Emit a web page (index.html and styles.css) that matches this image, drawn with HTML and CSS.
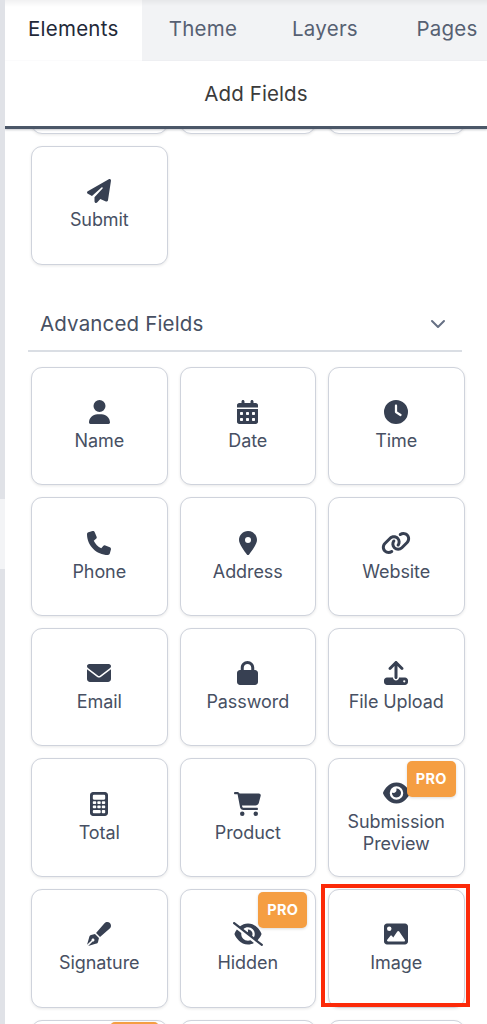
FILE: index.html
```html
<!DOCTYPE html>
<html lang="en">
<head>
<meta charset="utf-8">
<title>Add Fields</title>
<link rel="stylesheet" href="styles.css">
</head>
<body>
<div class="app">
  <aside class="rail"><div class="rail-handle"></div></aside>
  <main class="panel">
    <nav class="tabs">
      <a class="tab tab-active">Elements</a>
      <a class="tab">Theme</a>
      <a class="tab">Layers</a>
      <a class="tab">Pages</a>
    </nav>
    <h1 class="title">Add Fields</h1>
    <div class="scroller">
      <section class="grid grid-basic">
        <div class="card"></div>
        <div class="card"></div>
        <div class="card"></div>
        <div class="card"><svg class="icon" viewBox="0 0 512 512"><path d="M498.1 5.6c10.1 7 15.4 19.1 13.5 31.2l-64 416c-1.5 9.7-7.4 18.2-16 23s-18.9 5.4-28 1.6L284 427.7l-68.5 74.1c-8.9 9.7-22.9 12.9-35.2 8.1S160 493.2 160 480V396.4c0-4 1.5-7.8 4.2-10.7L331.8 202.8c5.8-6.3 5.6-16-.4-22s-15.7-6.4-22-.7L106 360.8 17.7 316.6C7.1 311.3 .3 300.7 0 288.9s5.9-22.8 16.1-28.7l448-256c10.7-6.1 23.9-5.5 34 1.4z"/></svg><span class="label">Submit</span></div>
      </section>
      <header class="section-head">
        <h2 class="section-title">Advanced Fields</h2>
        <svg class="chevron" viewBox="0 0 16 10"><path d="M2 2l6 6 6-6"/></svg>
      </header>
      <section class="grid">
        <div class="card"><svg class="icon" viewBox="0 0 448 512"><path d="M224 256A128 128 0 1 0 224 0a128 128 0 1 0 0 256zm-45.7 48C79.8 304 0 383.8 0 482.3C0 498.7 13.3 512 29.7 512H418.3c16.4 0 29.7-13.3 29.7-29.7C448 383.8 368.2 304 269.7 304H178.3z"/></svg><span class="label">Name</span></div>
        <div class="card"><svg class="icon" viewBox="0 0 448 512"><path fill-rule="evenodd" d="M128 0c17.700 0 32 14.300 32 32V64H288V32c0-17.700 14.300-32 32-32s32 14.300 32 32V64h48c26.500 0 48 21.500 48 48v48H0V112C0 85.500 21.500 64 48 64H96V32c0-17.700 14.300-32 32-32zM0 192H448V464c0 26.500-21.500 48-48 48H48c-26.500 0-48-21.500-48-48zM80 256q-16 0-16 16v32q0 16 16 16h32q16 0 16-16v-32q0-16-16-16zM208 256q-16 0-16 16v32q0 16 16 16h32q16 0 16-16v-32q0-16-16-16zM336 256q-16 0-16 16v32q0 16 16 16h32q16 0 16-16v-32q0-16-16-16zM80 384q-16 0-16 16v32q0 16 16 16h32q16 0 16-16v-32q0-16-16-16zM208 384q-16 0-16 16v32q0 16 16 16h32q16 0 16-16v-32q0-16-16-16zM336 384q-16 0-16 16v32q0 16 16 16h32q16 0 16-16v-32q0-16-16-16z"/></svg><span class="label">Date</span></div>
        <div class="card"><svg class="icon" viewBox="0 0 512 512"><path fill-rule="evenodd" d="M256 0a256 256 0 1 1 0 512A256 256 0 1 1 256 0zM232 120V256c0 8 4 15.5 10.7 20l96 64c11 7.4 25.9 4.4 33.300-6.700s4.400-25.900-6.700-33.300L280 243.200V120c0-13.300-10.700-24-24-24s-24 10.700-24 24z"/></svg><span class="label">Time</span></div>

        <div class="card"><svg class="icon" viewBox="0 0 512 512"><path d="M164.9 24.6c-7.7-18.6-28-28.5-47.4-23.2l-88 24C12.1 30.2 0 46 0 64C0 311.4 200.6 512 448 512c18 0 33.8-12.1 38.6-29.5l24-88c5.3-19.4-4.6-39.7-23.2-47.4l-96-40c-16.3-6.8-35.2-2.1-46.3 11.6L304.7 368C234.3 334.7 177.3 277.7 144 207.3L193.3 167c13.7-11.2 18.4-30 11.6-46.3l-40-96z"/></svg><span class="label">Phone</span></div>
        <div class="card"><svg class="icon" viewBox="0 0 384 512"><path fill-rule="evenodd" d="M215.7 499.2C267 435 384 279.4 384 192C384 86 298 0 192 0S0 86 0 192c0 87.4 117 243 168.3 307.2c12.300 15.300 35.100 15.300 47.400 0zM192 128a64 64 0 1 1 0 128 64 64 0 1 1 0-128z"/></svg><span class="label">Address</span></div>
        <div class="card"><svg class="icon" viewBox="0 0 640 512"><path d="M579.8 267.7c56.5-56.5 56.5-148 0-204.5c-50-50-128.8-56.5-186.3-15.4l-1.6 1.1c-14.4 10.3-17.7 30.3-7.4 44.6s30.3 17.7 44.6 7.4l1.6-1.1c32.1-22.9 76-19.3 103.8 8.6c31.5 31.5 31.5 82.5 0 114L422.3 334.8c-31.5 31.5-82.5 31.5-114 0c-27.9-27.9-31.5-71.8-8.6-103.800l1.100-1.600c10.300-14.400 6.900-34.400-7.400-44.600s-34.400-6.900-44.600 7.400l-1.100 1.600C206.500 251.200 213 330 263 380c56.500 56.500 148 56.500 204.500 0L579.800 267.700zM60.200 244.300c-56.500 56.500-56.500 148 0 204.500c50 50 128.800 56.500 186.300 15.400l1.600-1.100c14.400-10.300 17.700-30.300 7.400-44.600s-30.300-17.700-44.600-7.400l-1.600 1.100c-32.100 22.900-76 19.300-103.800-8.600C74 372 74 321 105.500 289.500L217.700 177.200c31.500-31.500 82.500-31.500 114 0c27.900 27.900 31.500 71.800 8.600 103.900l-1.100 1.600c-10.300 14.400-6.900 34.400 7.400 44.600s34.400 6.900 44.600-7.400l1.100-1.600C433.500 260.800 427 182 377 132c-56.500-56.500-148-56.500-204.500 0L60.200 244.300z"/></svg><span class="label">Website</span></div>

        <div class="card"><svg class="icon" viewBox="0 0 512 512"><path d="M48 64C21.5 64 0 85.5 0 112c0 15.1 7.1 29.3 19.2 38.4L236.8 313.6c11.4 8.5 27 8.5 38.4 0L492.8 150.4c12.1-9.1 19.2-23.3 19.2-38.4c0-26.5-21.5-48-48-48H48zM0 176V384c0 35.3 28.7 64 64 64H448c35.3 0 64-28.7 64-64V176L294.4 339.2c-22.8 17.1-54 17.1-76.8 0L0 176z"/></svg><span class="label">Email</span></div>
        <div class="card"><svg class="icon" viewBox="0 0 448 512"><path fill-rule="evenodd" d="M144 144v48H304V144c0-44.2-35.8-80-80-80s-80 35.8-80 80zM80 192V144C80 64.5 144.5 0 224 0s144 64.5 144 144v48h16c35.3 0 64 28.7 64 64V448c0 35.3-28.7 64-64 64H64c-35.3 0-64-28.7-64-64V256c0-35.3 28.7-64 64-64H80z"/></svg><span class="label">Password</span></div>
        <div class="card"><svg class="icon" viewBox="0 0 512 512"><path fill-rule="evenodd" d="M288 109.3V352c0 17.7-14.3 32-32 32s-32-14.3-32-32V109.3l-73.4 73.4c-12.5 12.5-32.8 12.5-45.3 0s-12.5-32.8 0-45.3l128-128c12.5-12.5 32.8-12.5 45.3 0l128 128c12.5 12.5 12.5 32.8 0 45.3s-32.8 12.5-45.3 0L288 109.3zM64 352H192c0 35.3 28.7 64 64 64s64-28.7 64-64H448c35.3 0 64 28.7 64 64v32c0 35.3-28.7 64-64 64H64c-35.3 0-64-28.7-64-64V416c0-35.3 28.7-64 64-64zM432 456a24 24 0 1 0 0-48 24 24 0 1 0 0 48z"/></svg><span class="label">File Upload</span></div>

        <div class="card"><svg class="icon" viewBox="0 0 384 512"><path fill-rule="evenodd" d="M64 0C28.7 0 0 28.7 0 64V448c0 35.3 28.7 64 64 64H320c35.3 0 64-28.7 64-64V64c0-35.3-28.7-64-64-64zM84 60q-24 0-24 24v56q0 24 24 24H300q24 0 24-24V84q0-24-24-24zM76 196h40q16 0 16 16v26q0 16-16 16H76q-16 0-16-16v-26q0-16 16-16zM172 196h40q16 0 16 16v26q0 16-16 16h-40q-16 0-16-16v-26q0-16 16-16zM268 196h40q16 0 16 16v26q0 16-16 16h-40q-16 0-16-16v-26q0-16 16-16zM76 290h40q16 0 16 16v24q0 16-16 16H76q-16 0-16-16v-24q0-16 16-16zM172 290h40q16 0 16 16v24q0 16-16 16h-40q-16 0-16-16v-24q0-16 16-16zM268 290h40q16 0 16 16v24q0 16-16 16h-40q-16 0-16-16v-24q0-16 16-16zM80 386h128q20 0 20 20v28q0 20-20 20H80q-20 0-20-20v-28q0-20 20-20zM268 386h40q16 0 16 16v36q0 16-16 16h-40q-16 0-16-16v-36q0-16 16-16z"/></svg><span class="label">Total</span></div>
        <div class="card"><svg class="icon" viewBox="0 0 576 512"><path d="M0 24C0 10.7 10.7 0 24 0H69.5c22 0 41.5 12.8 50.6 32h411c26.3 0 45.5 25 38.6 50.4l-41 152.3c-8.5 31.4-37 53.3-69.5 53.3H170.7l5.4 28.5c2.2 11.3 12.1 19.5 23.6 19.5H488c13.3 0 24 10.7 24 24s-10.7 24-24 24H199.7c-34.6 0-64.3-24.6-70.7-58.5L77.4 54.5c-.7-3.8-4-6.5-7.9-6.5H24C10.7 48 0 37.3 0 24zM128 464a48 48 0 1 1 96 0 48 48 0 1 1 -96 0zm336-48a48 48 0 1 1 0 96 48 48 0 1 1 0-96z"/></svg><span class="label">Product</span></div>
        <div class="card"><svg class="icon" viewBox="0 0 576 512"><path fill-rule="evenodd" d="M288 32c-80.8 0-145.5 36.8-192.6 80.6C48.6 156 17.3 208 2.5 243.7c-3.3 7.9-3.3 16.7 0 24.6C17.3 304 48.6 356 95.4 399.4C142.5 443.2 207.2 480 288 480s145.5-36.8 192.6-80.6c46.8-43.5 78.1-95.4 93-131.1c3.3-7.9 3.3-16.7 0-24.6c-14.9-35.7-46.2-87.7-93-131.1C433.5 68.8 368.8 32 288 32zM144 256a144 144 0 1 1 288 0 144 144 0 1 1 -288 0zm144-64c0 35.3-28.7 64-64 64c-7.1 0-13.9-1.2-20.3-3.3c-5.5-1.8-11.9 1.6-11.7 7.4c.3 6.9 1.3 13.8 3.2 20.7c13.7 51.2 66.4 81.6 117.6 67.9s81.6-66.4 67.9-117.6c-11.1-41.5-47.8-69.4-88.6-71.1c-5.8-.2-9.2 6.1-7.4 11.7c2.1 6.4 3.3 13.2 3.3 20.3z"/></svg><span class="label">Submission Preview</span><span class="badge">PRO</span></div>

        <div class="card"><svg class="icon" viewBox="0 0 512 512"><path fill-rule="evenodd" d="M373.5 27.1C388.5 9.9 410.2 0 433 0c43.6 0 79 35.4 79 79c0 22.8-9.9 44.6-27.1 59.6L277.7 319 193 234.3 373.5 27.1zM170.3 256.900L255.100 341.700L235.900 425.100c-3.900 17.100-16.900 30.700-33.800 35.400L24.300 511l95.400-95.400c2.600 .7 5.400 1.100 8.300 1.100c17.700 0 32-14.300 32-32s-14.300-32-32-32s-32 14.300-32 32c0 2.900 .4 5.600 1.100 8.300L1 487.800l50.500-177.900c4.700-16.900 18.300-29.900 35.400-33.800z"/></svg><span class="label">Signature</span></div>
        <div class="card"><svg class="icon" viewBox="0 0 640 512"><path d="M38.8 5.1C28.4-3.1 13.3-1.2 5.1 9.2S-1.2 34.7 9.2 42.9l592 464c10.4 8.2 25.5 6.3 33.7-4.1s6.3-25.5-4.1-33.7L525.6 386.7c39.6-40.6 66.4-86.1 79.9-118.4c3.3-7.9 3.3-16.7 0-24.6c-14.9-35.7-46.2-87.7-93-131.1C465.5 68.8 400.8 32 320 32c-68.2 0-125 26.3-169.3 60.8L38.8 5.1zM223.1 149.5C248.6 126.2 282.7 112 320 112c79.5 0 144 64.5 144 144c0 24.9-6.3 48.3-17.4 68.7L408 294.5c8.4-19.3 10.6-41.4 4.8-63.3c-11.1-41.5-47.8-69.4-88.6-71.1c-5.8-.2-9.2 6.1-7.4 11.7c2.1 6.4 3.3 13.2 3.3 20.3c0 10.2-2.4 19.8-6.6 28.3l-90.3-70.8zM373 389.9c-16.4 6.5-34.3 10.1-53 10.1c-79.5 0-144-64.5-144-144c0-6.9 .5-13.6 1.4-20.2L83.1 161.5C60.3 191.2 44 220.8 34.5 243.7c-3.3 7.9-3.3 16.7 0 24.6c14.9 35.7 46.2 87.7 93 131.1C174.5 443.2 239.2 480 320 480c47.8 0 89.9-12.9 126.2-32.5L373 389.9z"/></svg><span class="label">Hidden</span><span class="badge">PRO</span></div>
        <div class="card"><svg class="icon" viewBox="0 0 512 512"><path fill-rule="evenodd" d="M0 96C0 60.7 28.7 32 64 32H448c35.3 0 64 28.7 64 64V416c0 35.3-28.7 64-64 64H64c-35.3 0-64-28.7-64-64V96zM323.8 202.5c-4.5-6.6-11.9-10.5-19.8-10.5s-15.4 3.9-19.8 10.5l-87 127.6L170.7 297c-4.6-5.7-11.5-9-18.700-9s-14.200 3.300-18.700 9l-64 80c-5.800 7.200-6.900 17.100-2.900 25.400s12.400 13.600 21.600 13.600h96 32H424c8.900 0 17.100-4.900 21.200-12.800s3.600-17.400-1.400-24.700l-120-176zM112 192a48 48 0 1 0 0-96 48 48 0 1 0 0 96z"/></svg><span class="label">Image</span><span class="highlight"></span></div>

        <div class="card"><span class="badge"></span></div>
        <div class="card"></div>
        <div class="card"></div>
      </section>
    </div>
  </main>
</div>
</body>
</html>
```
FILE: styles.css
```css
* { box-sizing: border-box; }

body {
  margin: 0;
  background: #fff;
  font-family: Inter, "Liberation Sans", sans-serif;
  color: #475063;
}

.app {
  display: flex;
  height: 1024px;
  overflow: hidden;
}

.rail {
  flex: none;
  width: 4.500px;
  padding-top: 498.500px;
  background: #e0e2e7;
}

.rail-handle {
  height: 70px;
  background: #f3f4f6;
}

.panel {
  flex: 1;
  min-width: 0;
  display: flex;
  flex-direction: column;
  overflow: hidden;
}

.tabs {
  flex: none;
  display: flex;
  height: 61px;
  background: linear-gradient(#e6e7e9, #f2f3f5 6px);
}

.tab {
  flex: none;
  width: 122px;
  padding-top: 15px;
  text-align: center;
  font-size: 20.500px;
  line-height: 28px;
  letter-spacing: 0.250px;
  color: #566072;
}

.tab-active {
  width: 137.500px;
  background: linear-gradient(#f1f1f2, #fff 7px);
  color: #1f2939;
}

.title {
  flex: none;
  z-index: 1;
  margin: 0;
  height: 68px;
  padding: 19px 0 0 20.500px;
  border-bottom: 3px solid #4b5768;
  box-shadow: 0 1px 2px rgba(30, 41, 59, .25);
  text-align: center;
  font-size: 20.500px;
  font-weight: 400;
  line-height: 28px;
  letter-spacing: 0.100px;
  color: #3b3b3b;
}

.scroller {
  flex: 1;
  min-height: 0;
  overflow: hidden;
}

.grid {
  display: grid;
  grid-template-columns: repeat(3, 136.500px);
  grid-auto-rows: 118.600px;
  gap: 12px;
  padding-left: 26.500px;
}

.grid-basic { margin-top: -113.700px; }

.card {
  position: relative;
  display: flex;
  flex-direction: column;
  align-items: center;
  justify-content: center;
  gap: 6px;
  padding: 0.500px 0 0;
  border: 1.300px solid #cfd3dc;
  border-radius: 11px;
  background: #fff;
  box-shadow: 0 1px 3px rgba(0, 0, 0, .09);
}

.icon {
  height: 24px;
  fill: #374052;
}

.label {
  max-width: 120px;
  text-align: center;
  font-size: 18px;
  line-height: 22.500px;
  letter-spacing: -0.080px;
}

.badge {
  position: absolute;
  top: 1.500px;
  right: 7.800px;
  width: 49px;
  height: 36px;
  border-radius: 5px;
  background: #f59e42;
  box-shadow: 0 1px 3px rgba(0, 0, 0, .15);
  text-align: center;
  font-size: 14.500px;
  font-weight: 700;
  line-height: 36px;
  letter-spacing: 0.300px;
  color: #fff;
}

.highlight {
  position: absolute;
  inset: -6.300px -6px 0 -8px;
  border: 4px solid #fc2a09;
}

.section-head {
  display: flex;
  align-items: center;
  justify-content: space-between;
  width: 434px;
  height: 54px;
  margin: 33.500px 0 14.700px 23.500px;
  padding: 0 16px 0.500px 12px;
  border-bottom: 2px solid #dadee4;
}

.section-title {
  margin: 0;
  font-size: 20.500px;
  font-weight: 400;
  letter-spacing: 0.150px;
}

.chevron {
  width: 16px;
  height: 10px;
  fill: none;
  stroke: #667084;
  stroke-width: 2;
  stroke-linecap: round;
  stroke-linejoin: round;
}
```
